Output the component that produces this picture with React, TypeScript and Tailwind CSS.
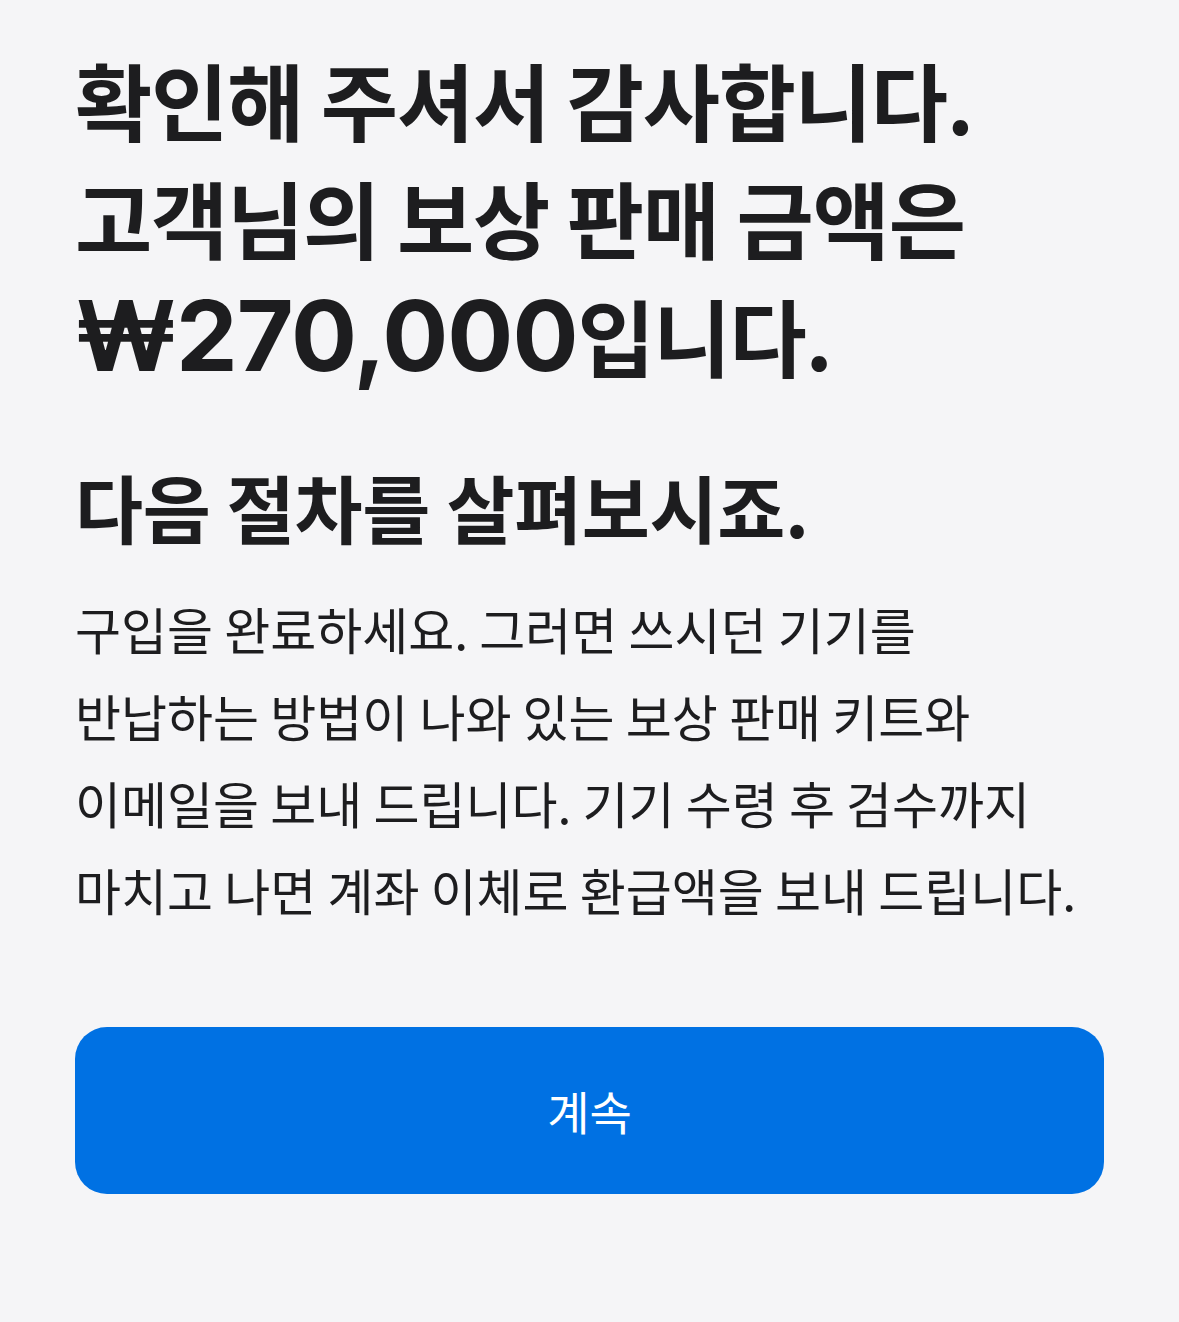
export default function App() {
  const font = { fontFamily: '"Noto Sans CJK KR", "Noto Sans", sans-serif' };
  return (
    <div className="min-h-[1322px] w-full bg-[#f5f5f7] text-[#1d1d1f]" style={font}>
      <div className="px-[75px] pt-[40px]">
        <h1 className="text-[84px] font-bold leading-[118px] tracking-[-0.015em]">
          확인해 주셔서 감사합니다.
          <br />
          고객님의 보상 판매 금액은
          <br />
          <span className="font-['Inter',sans-serif] text-[98px] tracking-[-0.01em]">₩270,000</span>입니다.
        </h1>
        <h2 className="mt-[61px] text-[74px] font-bold leading-[100px] tracking-[-0.005em]">
          다음 절차를 살펴보시죠.
        </h2>
        <p className="mt-[29px] text-[50px] leading-[87px]">
          구입을 완료하세요. 그러면 쓰시던 기기를
          <br />
          반납하는 방법이 나와 있는 보상 판매 키트와
          <br />
          이메일을 보내 드립니다. 기기 수령 후 검수까지
          <br />
          마치고 나면 계좌 이체로 환급액을 보내 드립니다.
        </p>
        <button className="mt-[94px] flex h-[167px] w-full items-center justify-center rounded-[32px] bg-[#0071e3] text-[46px] text-white">
          계속
        </button>
      </div>
    </div>
  );
}
